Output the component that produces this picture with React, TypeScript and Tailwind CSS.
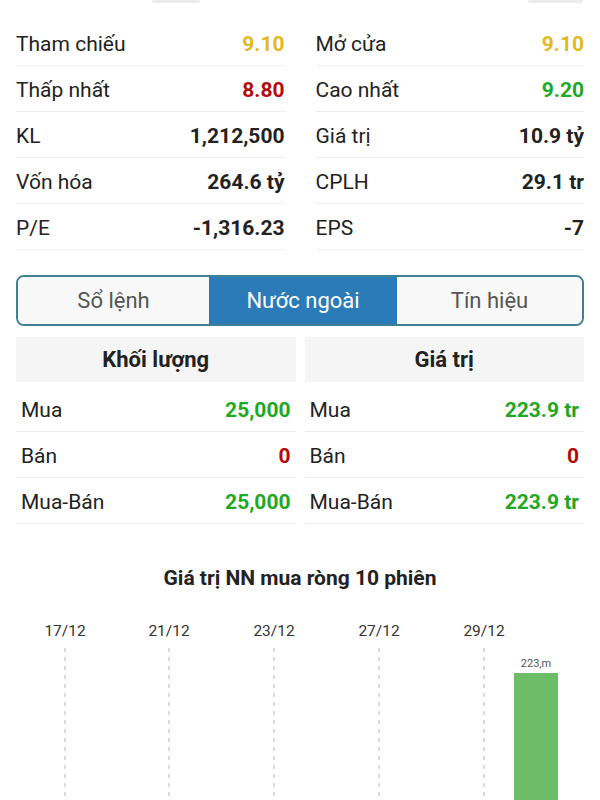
import React from "react"

type Stat = { label: string; value: string; color?: string }

const leftStats: Stat[] = [
  { label: "Tham chiếu", value: "9.10", color: "text-[#e2b91e]" },
  { label: "Thấp nhất", value: "8.80", color: "text-[#b40a0a]" },
  { label: "KL", value: "1,212,500" },
  { label: "Vốn hóa", value: "264.6 tỷ" },
  { label: "P/E", value: "-1,316.23" },
]

const rightStats: Stat[] = [
  { label: "Mở cửa", value: "9.10", color: "text-[#e2b91e]" },
  { label: "Cao nhất", value: "9.20", color: "text-[#1fa823]" },
  { label: "Giá trị", value: "10.9 tỷ" },
  { label: "CPLH", value: "29.1 tr" },
  { label: "EPS", value: "-7" },
]

const volume: Stat[] = [
  { label: "Mua", value: "25,000", color: "text-[#1fa823]" },
  { label: "Bán", value: "0", color: "text-[#b40a0a]" },
  { label: "Mua-Bán", value: "25,000", color: "text-[#1fa823]" },
]

const amount: Stat[] = [
  { label: "Mua", value: "223.9 tr", color: "text-[#1fa823]" },
  { label: "Bán", value: "0", color: "text-[#b40a0a]" },
  { label: "Mua-Bán", value: "223.9 tr", color: "text-[#1fa823]" },
]

const dates = [
  { label: "17/12", x: 65 },
  { label: "21/12", x: 169 },
  { label: "23/12", x: 274 },
  { label: "27/12", x: 379 },
  { label: "29/12", x: 484 },
]

function StatRow({ stat, pad }: { stat: Stat; pad?: string }) {
  return (
    <div
      className={`flex h-[46px] items-center justify-between border-b border-[#ececec] pt-[4px] text-[21px] ${pad ?? ""}`}
    >
      <span className="text-[#222]">{stat.label}</span>
      <span className={`font-bold ${stat.color ?? "text-[#222]"}`}>{stat.value}</span>
    </div>
  )
}

function ForeignColumn({ title, rows }: { title: string; rows: Stat[] }) {
  return (
    <div className="flex flex-col">
      <div className="flex h-[45px] items-center justify-center bg-[#f5f5f5] text-[22px] font-bold text-[#222]">
        {title}
      </div>
      <div className="mt-[4px]">
        {rows.map((r) => (
          <StatRow key={r.label} stat={r} pad="px-[5px]" />
        ))}
      </div>
    </div>
  )
}

export default function App() {
  return (
    <div
      className="relative h-[800px] w-[600px] overflow-hidden bg-white"
      style={{ fontFamily: "Roboto, 'Noto Sans', sans-serif" }}
    >
      <div className="absolute top-0 left-[152px] h-[3px] w-[48px] rounded-b bg-[#ececec]" />
      <div className="absolute top-0 left-[528px] h-[3px] w-[55px] rounded-b bg-[#ececec]" />

      <div className="grid grid-cols-2 gap-x-[31px] px-[16px] pt-[20px]">
        <div>
          {leftStats.map((s) => (
            <StatRow key={s.label} stat={s} />
          ))}
        </div>
        <div>
          {rightStats.map((s) => (
            <StatRow key={s.label} stat={s} />
          ))}
        </div>
      </div>

      <div className="mx-[16px] mt-[25px] grid h-[51px] grid-cols-[191px_188px_1fr] overflow-hidden rounded-[8px] border-2 border-[#3f7f93] text-[22px]">
        <div className="flex items-center justify-center bg-[#f8f8f8] text-[#555]">Sổ lệnh</div>
        <div className="flex items-center justify-center bg-[#2a7bb7] text-white">Nước ngoài</div>
        <div className="flex items-center justify-center bg-[#f8f8f8] text-[#555]">Tín hiệu</div>
      </div>

      <div className="mt-[11px] grid grid-cols-2 gap-x-[9px] px-[16px]">
        <ForeignColumn title="Khối lượng" rows={volume} />
        <ForeignColumn title="Giá trị" rows={amount} />
      </div>

      <div className="mt-[40px] text-center text-[21px] leading-[28px] font-bold text-[#222]">
        Giá trị NN mua ròng 10 phiên
      </div>

      <svg width="600" height="190" viewBox="0 610 600 190" className="mt-[18px] block">
        {dates.map((d) => (
          <g key={d.label}>
            <text
              x={d.x}
              y={636}
              textAnchor="middle"
              fontSize="15.5"
              fill="#333"
              fontFamily="Roboto, sans-serif"
            >
              {d.label}
            </text>
            <line
              x1={d.x}
              y1={648}
              x2={d.x}
              y2={800}
              stroke="#b5b5b5"
              strokeWidth="1"
              strokeDasharray="4 5"
            />
          </g>
        ))}
        <text x={536} y={667} textAnchor="middle" fontSize="11" fill="#555" fontFamily="Roboto, sans-serif">
          223,m
        </text>
        <rect x={514} y={673} width={44} height={127} fill="#6dbd68" />
      </svg>
    </div>
  )
}
